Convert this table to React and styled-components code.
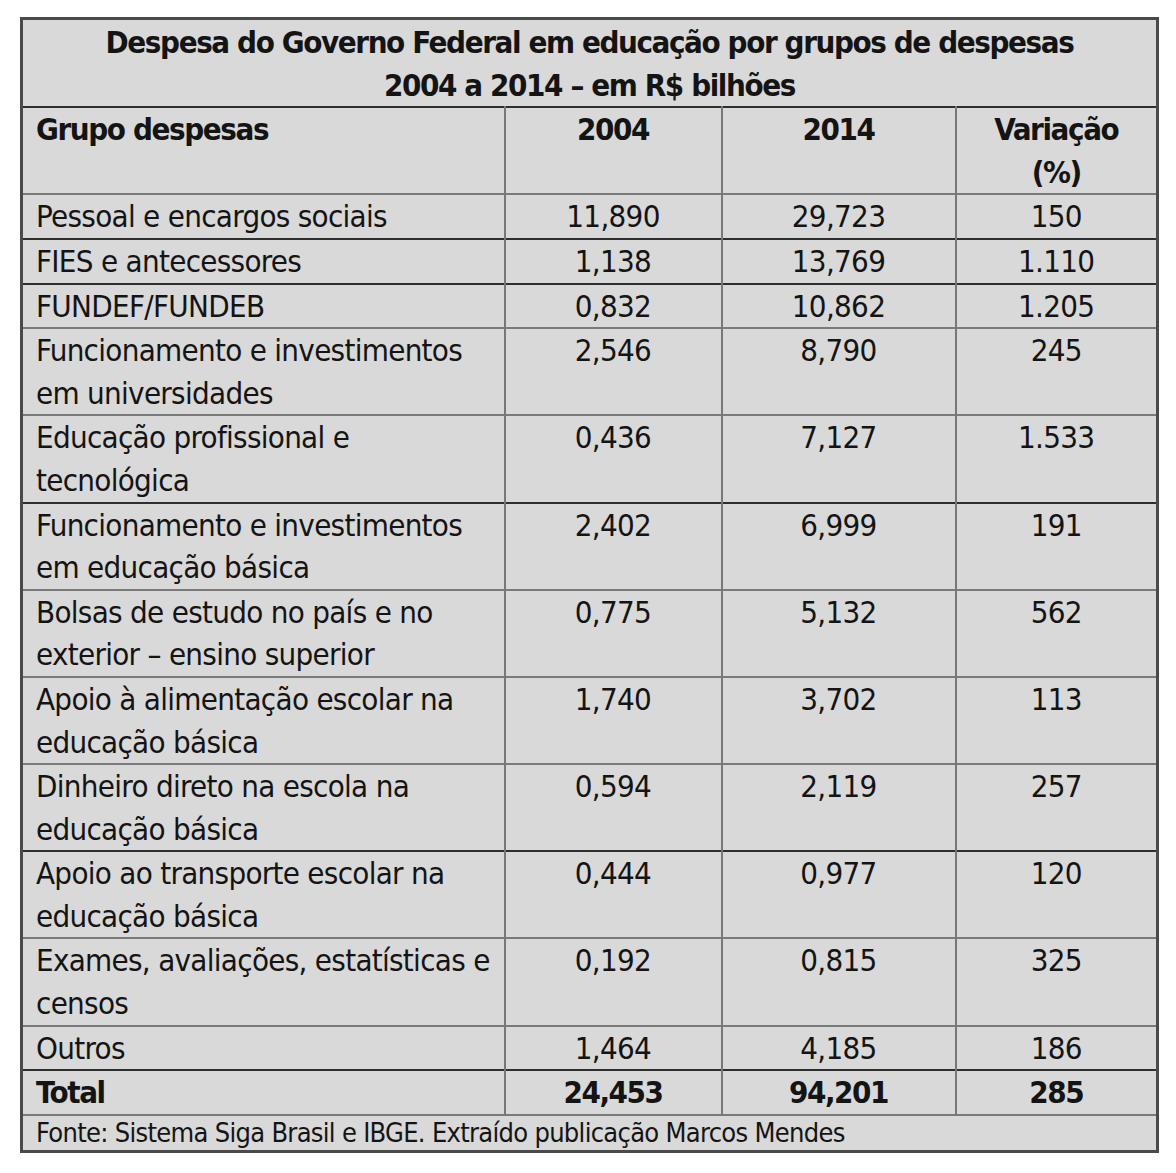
import React from "react";
import styled, { createGlobalStyle } from "styled-components";

const GlobalStyle = createGlobalStyle`
    html, body {
        margin: 0;
        padding: 0;
        background: #ffffff;
    }
    body {
        font-family: "DejaVu Sans Condensed", "DejaVu Sans", sans-serif;
        font-stretch: condensed;
        color: #141414;
    }
`;

const Page = styled.div`
    padding: 17px 0 0 20px;
`;

const Table = styled.table`
    width: 1139px;
    table-layout: fixed;
    border-collapse: collapse;
    background: #d9d9d9;
    border: 3px solid #4a4a4a;
    font-size: 31px;
    letter-spacing: -0.7px;
`;

const lineColor = {
    dark: "#2e2e2e",
    light: "#7a7a7a",
};

const Row = styled.tr`
    border-bottom: 2px solid ${(p) => lineColor[p.$line || "light"]};
`;

const TitleCell = styled.th`
    padding: 1px 0 0;
    line-height: 42.6px;
    font-weight: 700;
    letter-spacing: -1.4px;
    text-align: center;
`;

const HeadCell = styled.th`
    padding: 0 13px;
    line-height: 42.6px;
    height: 85px;
    vertical-align: top;
    font-weight: 700;
    letter-spacing: -1.4px;
    text-align: ${(p) => (p.$left ? "left" : "center")};
    border-left: ${(p) => (p.$left ? "none" : "2px solid #777777")};
`;

const LabelCell = styled.td`
    padding: 0 2px 0 13px;
    line-height: 42.6px;
    vertical-align: top;
    text-align: left;
    white-space: nowrap;
    font-weight: ${(p) => (p.$bold ? 700 : 400)};
    letter-spacing: ${(p) => (p.$bold ? "-1.4px" : "-0.7px")};
`;

const NumCell = styled.td`
    padding: 0;
    line-height: 42.6px;
    vertical-align: top;
    text-align: center;
    border-left: 2px solid #777777;
    font-weight: ${(p) => (p.$bold ? 700 : 400)};
    letter-spacing: ${(p) => (p.$bold ? "-1.4px" : "-0.7px")};
`;

const SourceCell = styled.td`
    padding: 0 13px;
    line-height: 34px;
    font-size: 27px;
    letter-spacing: -0.7px;
    white-space: nowrap;
    text-align: left;
`;

const rows = [
    { label: ["Pessoal e encargos sociais"], a: "11,890", b: "29,723", v: "150", line: "dark" },
    { label: ["FIES e antecessores"], a: "1,138", b: "13,769", v: "1.110", line: "dark" },
    { label: ["FUNDEF/FUNDEB"], a: "0,832", b: "10,862", v: "1.205" },
    { label: ["Funcionamento e investimentos", "em universidades"], a: "2,546", b: "8,790", v: "245" },
    { label: ["Educação profissional e", "tecnológica"], a: "0,436", b: "7,127", v: "1.533", line: "dark" },
    { label: ["Funcionamento e investimentos", "em educação básica"], a: "2,402", b: "6,999", v: "191" },
    { label: ["Bolsas de estudo no país e no", "exterior – ensino superior"], a: "0,775", b: "5,132", v: "562" },
    { label: ["Apoio à alimentação escolar na", "educação básica"], a: "1,740", b: "3,702", v: "113" },
    { label: ["Dinheiro direto na escola na", "educação básica"], a: "0,594", b: "2,119", v: "257", line: "dark" },
    { label: ["Apoio ao transporte escolar na", "educação básica"], a: "0,444", b: "0,977", v: "120" },
    { label: ["Exames, avaliações, estatísticas e", "censos"], a: "0,192", b: "0,815", v: "325" },
    { label: ["Outros"], a: "1,464", b: "4,185", v: "186", line: "dark" },
];

function Lines({ parts }) {
    return parts.map((t, i) => (
        <React.Fragment key={i}>
            {i > 0 && <br />}
            {t}
        </React.Fragment>
    ));
}

export default function App() {
    return (
        <>
            <GlobalStyle />
            <Page>
                <Table>
                    <colgroup>
                        <col style={{ width: 483 }} />
                        <col style={{ width: 217 }} />
                        <col style={{ width: 234 }} />
                        <col />
                    </colgroup>
                    <thead>
                        <Row $line="dark">
                            <TitleCell colSpan={4}>
                                Despesa do Governo Federal em educação por grupos de despesas
                                <br />
                                2004 a 2014 – em R$ bilhões
                            </TitleCell>
                        </Row>
                        <Row>
                            <HeadCell $left>Grupo despesas</HeadCell>
                            <HeadCell>2004</HeadCell>
                            <HeadCell>2014</HeadCell>
                            <HeadCell>
                                Variação
                                <br />
                                (%)
                            </HeadCell>
                        </Row>
                    </thead>
                    <tbody>
                        {rows.map((r) => (
                            <Row key={r.label[0]} $line={r.line}>
                                <LabelCell>
                                    <Lines parts={r.label} />
                                </LabelCell>
                                <NumCell>{r.a}</NumCell>
                                <NumCell>{r.b}</NumCell>
                                <NumCell>{r.v}</NumCell>
                            </Row>
                        ))}
                        <Row>
                            <LabelCell $bold>Total</LabelCell>
                            <NumCell $bold>24,453</NumCell>
                            <NumCell $bold>94,201</NumCell>
                            <NumCell $bold>285</NumCell>
                        </Row>
                        <tr>
                            <SourceCell colSpan={4}>
                                Fonte: Sistema Siga Brasil e IBGE. Extraído publicação Marcos Mendes
                            </SourceCell>
                        </tr>
                    </tbody>
                </Table>
            </Page>
        </>
    );
}
